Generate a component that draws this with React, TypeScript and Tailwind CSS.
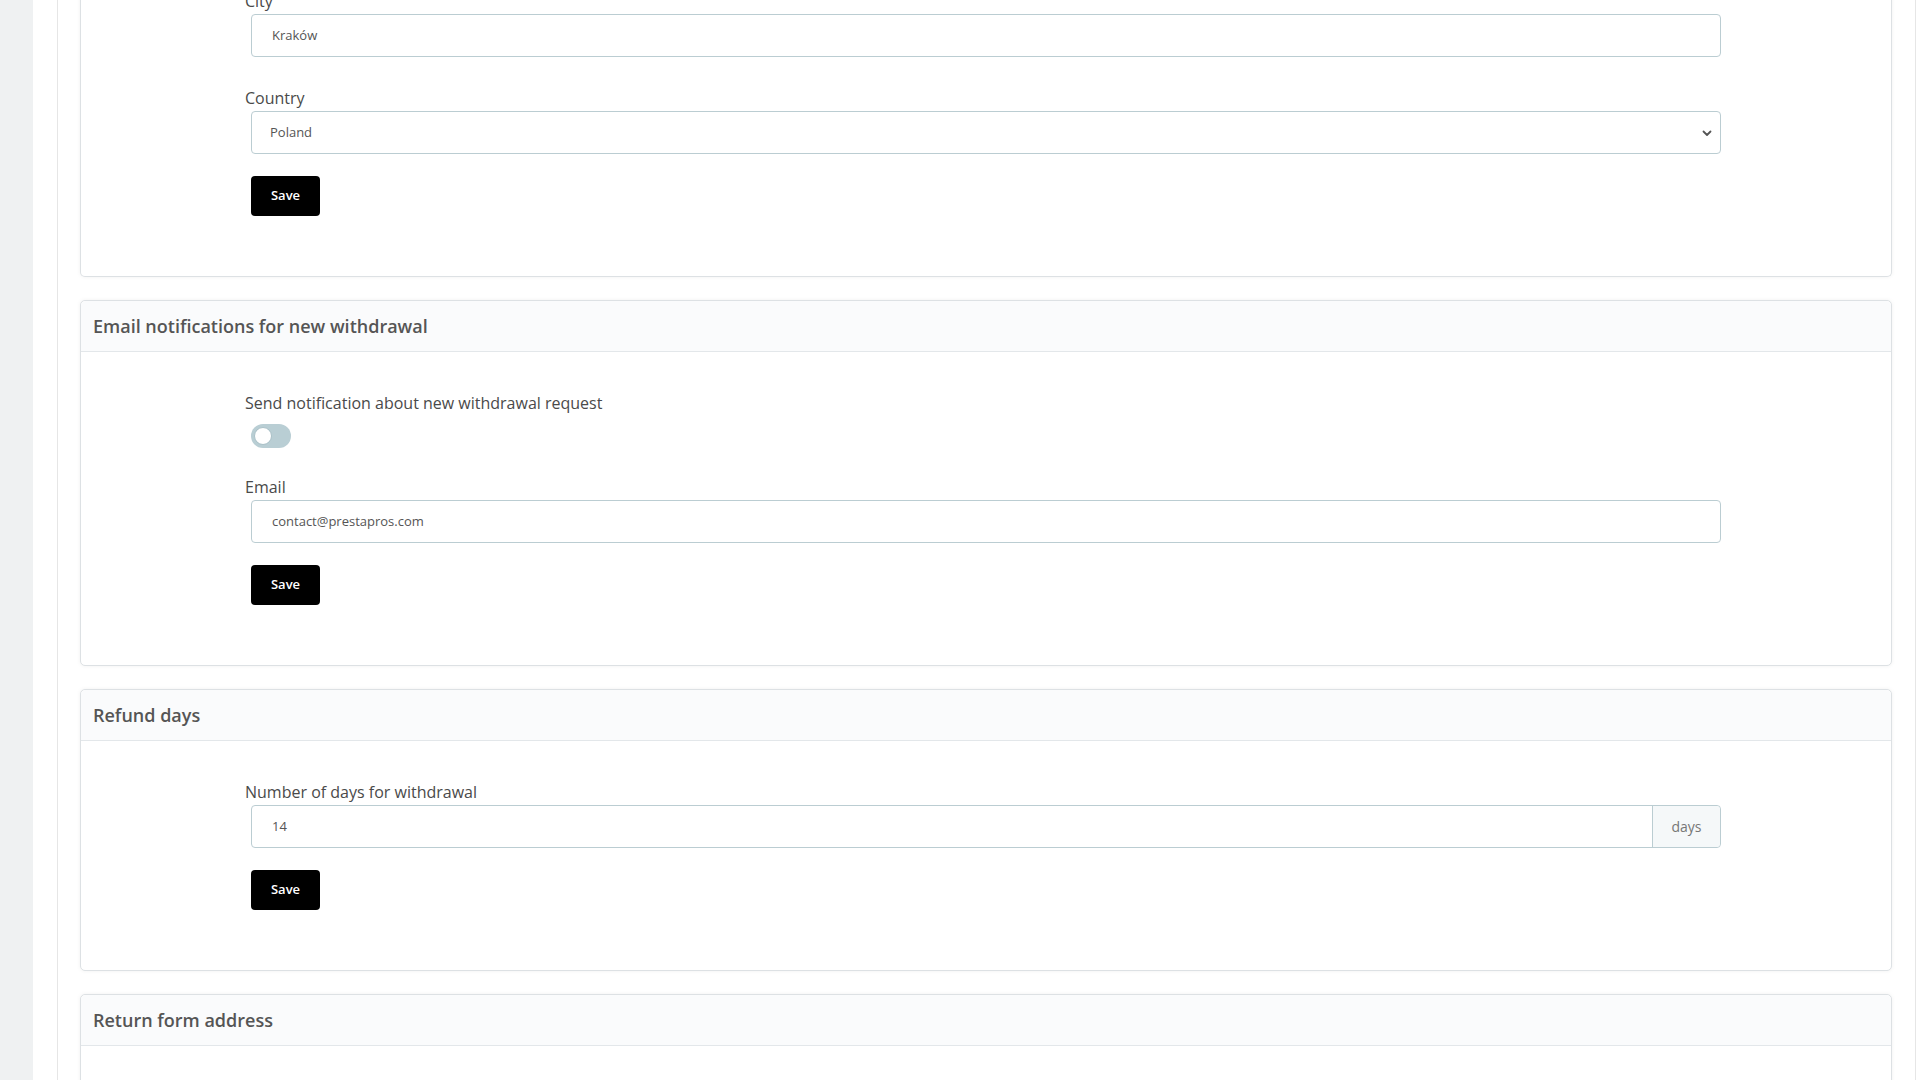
import React from 'react';

function Card({ title, children, cut }: { title?: string; children?: React.ReactNode; cut?: boolean }) {
  return (
    <div
      className={
        'bg-white border border-[#dde1e4] shadow-[0_0_4px_rgba(0,0,0,0.06)] mb-[23px] ' +
        (cut ? 'border-t-0 rounded-b-[5px]' : 'rounded-[5px]')
      }
    >
      {title && (
        <div className="h-[51px] flex items-center pl-[12px] bg-[#fafbfc] border-b border-[#e3e7ea] rounded-t-[5px]">
          <h3 className="text-[18px] font-semibold text-[#555]">{title}</h3>
        </div>
      )}
      {children}
    </div>
  );
}

function Label({ children }: { children: React.ReactNode }) {
  return <label className="block text-[16px] leading-[21px] text-[#4a4a4a] mb-[2px]">{children}</label>;
}

function TextInput({ value }: { value: string }) {
  return (
    <div className="pl-[6px]">
      <div className="h-[43px] flex items-center border border-[#bbcdd2] rounded-[4px] bg-white pl-[20px] text-[13px] text-[#555]">
        {value}
      </div>
    </div>
  );
}

function SaveButton() {
  return (
    <div className="pl-[6px] mt-[22px]">
      <button className="h-[40px] w-[69px] bg-black text-white rounded-[4px] text-[13px] font-semibold">Save</button>
    </div>
  );
}

function Body({ children, first }: { children: React.ReactNode; first?: boolean }) {
  return <div className={'pl-[164px] pr-[170px] pb-[60px] ' + (first ? 'pt-0' : 'pt-[41px]')}>{children}</div>;
}

export default function App() {
  return (
    <div className="h-screen w-full overflow-hidden flex bg-white" style={{ fontFamily: '"Open Sans", "Noto Sans", sans-serif' }}>
      <div className="w-[33px] shrink-0 bg-[#eff1f2]" />
      <div className="flex-1 flex pl-[24px] pr-[4px]">
        <div className="flex-1 border-x border-[#e6e6e6] pl-[22px] pr-[23px]">
          <div className="-mt-[9px]">
            <Card cut>
              <Body first>
                <div className="mb-[31px]">
                  <Label>City</Label>
                  <TextInput value="Kraków" />
                </div>
                <div>
                  <Label>Country</Label>
                  <div className="pl-[6px]">
                    <div className="h-[43px] flex items-center justify-between border border-[#bbcdd2] rounded-[4px] bg-white pl-[18px] pr-[7px] text-[13px] text-[#555]">
                      <span>Poland</span>
                      <svg width="12" height="12" viewBox="0 0 12 12" fill="none">
                        <path d="M2.5 4.5 6 8l3.5-3.5" stroke="#555" strokeWidth="1.8" strokeLinecap="round" strokeLinejoin="round" />
                      </svg>
                    </div>
                  </div>
                </div>
                <SaveButton />
              </Body>
            </Card>

            <Card title="Email notifications for new withdrawal">
              <Body>
                <div className="mb-[29px]">
                  <label className="block text-[16px] leading-[21px] text-[#4a4a4a]">Send notification about new withdrawal request</label>
                  <div className="pl-[6px] mt-[10px]">
                    <div className="relative w-[40px] h-[24px] rounded-full bg-[#b9ced4]">
                      <div className="absolute left-[3px] top-[3px] w-[18px] h-[18px] rounded-full bg-white border border-[#a9c0c7]" />
                    </div>
                  </div>
                </div>
                <div>
                  <Label>Email</Label>
                  <TextInput value="contact@prestapros.com" />
                </div>
                <SaveButton />
              </Body>
            </Card>

            <Card title="Refund days">
              <Body>
                <div>
                  <Label>Number of days for withdrawal</Label>
                  <div className="pl-[6px]">
                    <div className="h-[43px] flex border border-[#bbcdd2] rounded-[4px] bg-white text-[13px] text-[#555]">
                      <div className="flex-1 flex items-center pl-[20px]">14</div>
                      <div className="w-[68px] flex items-center justify-center border-l border-[#bbcdd2] bg-[#f5f8f9] rounded-r-[4px] text-[14px] text-[#777]">
                        days
                      </div>
                    </div>
                  </div>
                </div>
                <SaveButton />
              </Body>
            </Card>

            <Card title="Return form address">
              <div className="h-[200px]" />
            </Card>
          </div>
        </div>
      </div>
    </div>
  );
}
